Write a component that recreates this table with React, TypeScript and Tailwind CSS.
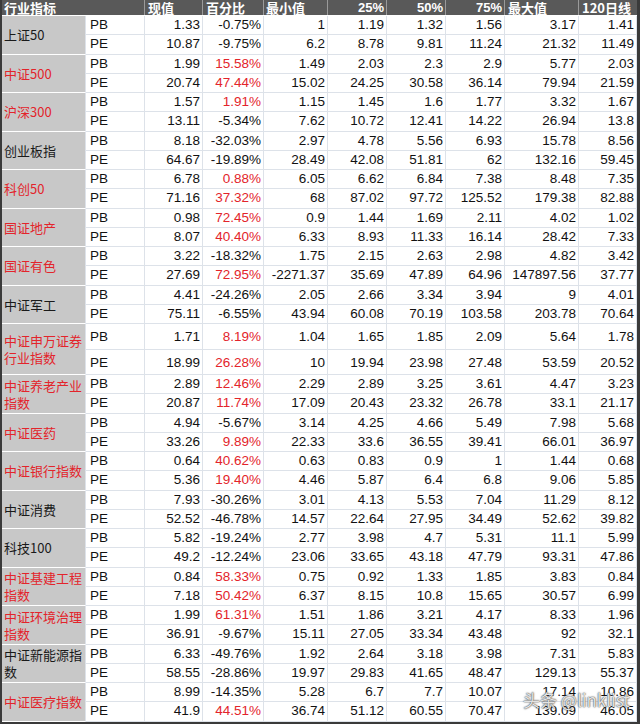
import React from "react";

type Group = { name: string; red: boolean; tall?: boolean; pb: string[]; pe: string[] };

const groups: Group[] = [
  { name: "上证50", red: false, pb: ["1.33", "-0.75%", "1", "1.19", "1.32", "1.56", "3.17", "1.41"], pe: ["10.87", "-9.75%", "6.2", "8.78", "9.81", "11.24", "21.32", "11.49"] },
  { name: "中证500", red: true, pb: ["1.99", "15.58%", "1.49", "2.03", "2.3", "2.9", "5.77", "2.03"], pe: ["20.74", "47.44%", "15.02", "24.25", "30.58", "36.14", "79.94", "21.59"] },
  { name: "沪深300", red: true, pb: ["1.57", "1.91%", "1.15", "1.45", "1.6", "1.77", "3.32", "1.67"], pe: ["13.11", "-5.34%", "7.62", "10.72", "12.41", "14.22", "26.94", "13.8"] },
  { name: "创业板指", red: false, pb: ["8.18", "-32.03%", "2.97", "4.78", "5.56", "6.93", "15.78", "8.56"], pe: ["64.67", "-19.89%", "28.49", "42.08", "51.81", "62", "132.16", "59.45"] },
  { name: "科创50", red: true, pb: ["6.78", "0.88%", "6.05", "6.62", "6.84", "7.38", "8.48", "7.35"], pe: ["71.16", "37.32%", "68", "87.02", "97.72", "125.52", "179.38", "82.88"] },
  { name: "国证地产", red: true, pb: ["0.98", "72.45%", "0.9", "1.44", "1.69", "2.11", "4.02", "1.02"], pe: ["8.07", "40.40%", "6.33", "8.93", "11.33", "16.14", "28.42", "7.33"] },
  { name: "国证有色", red: true, pb: ["3.22", "-18.32%", "1.75", "2.15", "2.63", "2.98", "4.82", "3.42"], pe: ["27.69", "72.95%", "-2271.37", "35.69", "47.89", "64.96", "147897.56", "37.77"] },
  { name: "中证军工", red: false, pb: ["4.41", "-24.26%", "2.05", "2.66", "3.34", "3.94", "9", "4.01"], pe: ["75.11", "-6.55%", "43.94", "60.08", "70.19", "103.58", "203.78", "70.64"] },
  { name: "中证申万证券行业指数", red: true, tall: true, pb: ["1.71", "8.19%", "1.04", "1.65", "1.85", "2.09", "5.64", "1.78"], pe: ["18.99", "26.28%", "10", "19.94", "23.98", "27.48", "53.59", "20.52"] },
  { name: "中证养老产业指数", red: true, pb: ["2.89", "12.46%", "2.29", "2.89", "3.25", "3.61", "4.47", "3.23"], pe: ["20.87", "11.74%", "17.09", "20.43", "23.32", "26.78", "33.1", "21.17"] },
  { name: "中证医药", red: true, pb: ["4.94", "-5.67%", "3.14", "4.25", "4.66", "5.49", "7.98", "5.68"], pe: ["33.26", "9.89%", "22.33", "33.6", "36.55", "39.41", "66.01", "36.97"] },
  { name: "中证银行指数", red: true, pb: ["0.64", "40.62%", "0.63", "0.83", "0.9", "1", "1.44", "0.68"], pe: ["5.36", "19.40%", "4.46", "5.87", "6.4", "6.8", "9.06", "5.85"] },
  { name: "中证消费", red: false, pb: ["7.93", "-30.26%", "3.01", "4.13", "5.53", "7.04", "11.29", "8.12"], pe: ["52.52", "-46.78%", "14.57", "22.64", "27.95", "34.49", "52.62", "39.82"] },
  { name: "科技100", red: false, pb: ["5.82", "-19.24%", "2.77", "3.98", "4.7", "5.31", "11.1", "5.99"], pe: ["49.2", "-12.24%", "23.06", "33.65", "43.18", "47.79", "93.31", "47.86"] },
  { name: "中证基建工程指数", red: true, pb: ["0.84", "58.33%", "0.75", "0.92", "1.33", "1.85", "3.83", "0.84"], pe: ["7.18", "50.42%", "6.37", "8.15", "10.8", "15.65", "30.57", "6.99"] },
  { name: "中证环境治理指数", red: true, pb: ["1.99", "61.31%", "1.51", "1.86", "3.21", "4.17", "8.33", "1.96"], pe: ["36.91", "-9.67%", "15.11", "27.05", "33.34", "43.48", "92", "32.1"] },
  { name: "中证新能源指数", red: false, pb: ["6.33", "-49.76%", "1.92", "2.64", "3.18", "3.98", "7.31", "5.83"], pe: ["58.55", "-28.86%", "19.97", "29.83", "41.65", "48.47", "129.13", "55.37"] },
  { name: "中证医疗指数", red: true, pb: ["8.99", "-14.35%", "5.28", "6.7", "7.7", "10.07", "17.14", "10.86"], pe: ["41.9", "44.51%", "36.74", "51.12", "60.55", "70.47", "139.09", "46.05"] },
];

const valW = ["w-[58px]", "w-[61px]", "w-[64px]", "w-[59px]", "w-[59px]", "w-[59px]", "w-[74px]", "w-[58px]"];

const num = "font-['Liberation_Sans',sans-serif] text-[13.5px]";
const cjk = "font-['Noto_Sans_CJK_SC','Noto_Sans_CJK_JP',sans-serif]";

function DataRow({ label, vals, tall }: { label: string; vals: string[]; tall?: boolean }) {
  const h = tall ? "h-[25.5px] items-end pb-[1px]" : "h-[19.25px] items-center";
  return (
    <div className="flex">
      <div className={`w-[59px] ${h} flex pl-[4px] border-r border-b border-[#dde2e9] text-[#111] ${num}`}>{label}</div>
      {vals.map((s, i) => {
        const red = i === 1 && !s.startsWith("-");
        return (
          <div
            key={i}
            className={`${valW[i]} ${h} flex justify-end pr-[2px] border-r border-b border-[#dde2e9] ${num} ${red ? "text-[#e3242b]" : "text-[#111]"}`}
          >
            {s}
          </div>
        );
      })}
    </div>
  );
}

export default function App() {
  return (
    <div className="w-[640px] h-[727px] bg-white overflow-hidden">
      <div className="relative w-[640px] border-l-2 border-r-[3px] border-b-2 border-[#3a3a3a]">
        <div className={`flex h-[16px] bg-[#595959] border-b border-white text-white font-bold text-[13px] leading-[15px] ${cjk}`}>
          <div className="w-[143px] h-[15px] flex items-center pl-[2px] border-r border-[#9a9a9a]">行业指标</div>
          <div className="w-[58px] h-[15px] flex items-center pl-[3px] border-r border-[#9a9a9a]">现值</div>
          <div className="w-[61px] h-[15px] flex items-center pl-[3px] border-r border-[#9a9a9a]">百分比</div>
          <div className="w-[64px] h-[15px] flex items-center pl-[2px] border-r border-[#9a9a9a]">最小值</div>
          <div className="w-[59px] h-[15px] flex items-center justify-end pr-[2px] border-r border-[#9a9a9a] font-['Liberation_Sans',sans-serif]">25%</div>
          <div className="w-[59px] h-[15px] flex items-center justify-end pr-[2px] border-r border-[#9a9a9a] font-['Liberation_Sans',sans-serif]">50%</div>
          <div className="w-[59px] h-[15px] flex items-center justify-end pr-[2px] border-r border-[#9a9a9a] font-['Liberation_Sans',sans-serif]">75%</div>
          <div className="w-[74px] h-[15px] flex items-center pl-[3px] border-r border-[#9a9a9a]">最大值</div>
          <div className="w-[58px] h-[15px] flex items-center pl-[3px]">120日线</div>
        </div>
        {groups.map((g) => (
          <div key={g.name} className="flex">
            <div
              className={`w-[84px] flex items-center pl-[2px] pr-[1px] bg-[#c8c8c8] border-b border-white border-r border-r-[#dde2e9] text-[13px] leading-[17px] ${cjk} ${g.red ? "text-[#e3242b]" : "text-[#1a1a1a]"}`}
            >
              <span className="break-all">{g.name}</span>
            </div>
            <div className="flex flex-col">
              <DataRow label="PB" vals={g.pb} tall={g.tall} />
              <DataRow label="PE" vals={g.pe} tall={g.tall} />
            </div>
          </div>
        ))}
        <div
          className={`absolute left-[521px] top-[689px] whitespace-nowrap text-[17px] leading-[22px] text-white/85 ${cjk} [text-shadow:0_0_1px_#333,0_0_2px_#555]`}
        >
          头条 @linklist
        </div>
      </div>
    </div>
  );
}
